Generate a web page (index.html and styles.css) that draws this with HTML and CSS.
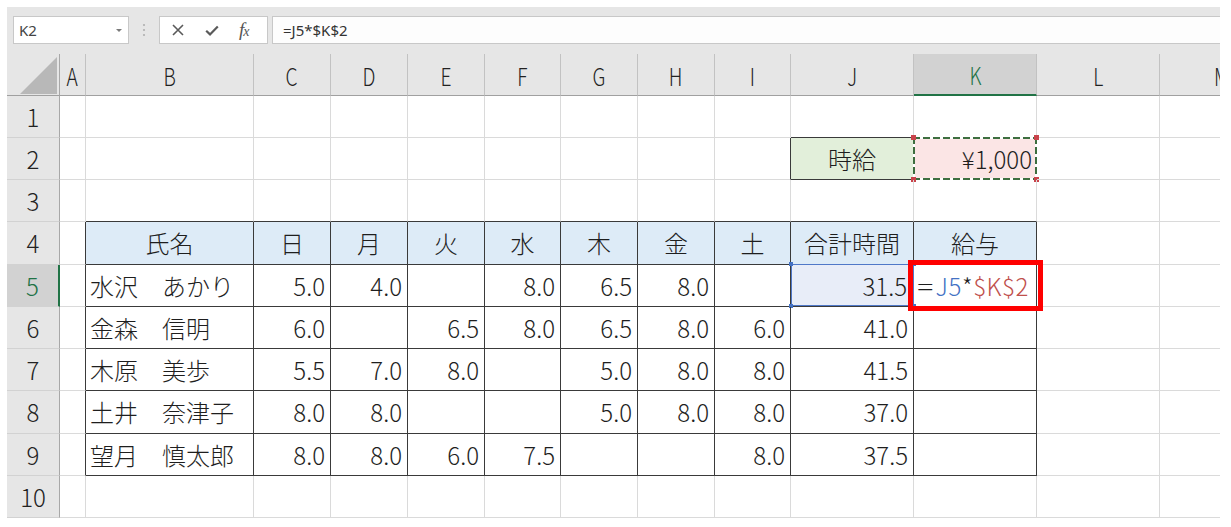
FILE: index.html
```html
<!DOCTYPE html>
<html lang="ja">
<head>
<meta charset="utf-8">
<title>Excel</title>
<link rel="stylesheet" href="styles.css">
</head>
<body>
<div class="app">
  <div class="toolbar">
    <div class="namebox"><span>K2</span><i class="caret"></i></div>
    <div class="grip"><svg width="4" height="14" viewBox="0 0 4 14"><circle cx="2" cy="2" r="1.1" fill="#b0b0b0"/><circle cx="2" cy="7" r="1.1" fill="#b0b0b0"/><circle cx="2" cy="12" r="1.1" fill="#b0b0b0"/></svg></div>
    <div class="fxbox">
      <svg width="12" height="12" viewBox="0 0 12 12"><path d="M1 1L11 11M11 1L1 11" stroke="#5a5a5a" stroke-width="1.6" fill="none"/></svg>
      <svg width="14" height="11" viewBox="0 0 14 11"><path d="M1.2 5.8L5 9.4L12.8 1.4" stroke="#5a5a5a" stroke-width="2.2" fill="none"/></svg>
      <span class="fx">f<span class="fxx">x</span></span>
    </div>
    <div class="formula">=J5*$K$2</div>
  </div>
  <div class="viewport">
    <div class="sheet">
      <div class="corner"><i class="tri"></i></div>
      <div class="ch"><span>A</span></div>
      <div class="ch"><span>B</span></div>
      <div class="ch"><span>C</span></div>
      <div class="ch"><span>D</span></div>
      <div class="ch"><span>E</span></div>
      <div class="ch"><span>F</span></div>
      <div class="ch"><span>G</span></div>
      <div class="ch"><span>H</span></div>
      <div class="ch"><span>I</span></div>
      <div class="ch"><span>J</span></div>
      <div class="ch on"><span>K</span></div>
      <div class="ch"><span>L</span></div>
      <div class="ch last"><span>M</span></div>

      <div class="rh">1</div>
      <div class="c"></div><div class="c"></div><div class="c"></div><div class="c"></div><div class="c"></div><div class="c"></div><div class="c"></div><div class="c"></div><div class="c"></div>
      <div class="c bB"></div><div class="c"></div><div class="c"></div><div class="c"></div>

      <div class="rh">2</div>
      <div class="c"></div><div class="c"></div><div class="c"></div><div class="c"></div><div class="c"></div><div class="c"></div><div class="c"></div><div class="c"></div>
      <div class="c bR"></div>
      <div class="c t green ctr">時給</div>
      <div class="c pink num">¥1,000<div class="ants"><i class="sq tl"></i><i class="sq tr"></i><i class="sq bl"></i><i class="sq br"></i></div></div>
      <div class="c"></div><div class="c"></div>

      <div class="rh">3</div>
      <div class="c"></div>
      <div class="c bB"></div><div class="c bB"></div><div class="c bB"></div><div class="c bB"></div><div class="c bB"></div><div class="c bB"></div><div class="c bB"></div><div class="c bB"></div><div class="c bB"></div><div class="c bB"></div>
      <div class="c"></div><div class="c"></div>

      <div class="rh">4</div>
      <div class="c bR"></div>
      <div class="c t hd ctr">氏名</div>
      <div class="c t hd ctr">日</div>
      <div class="c t hd ctr">月</div>
      <div class="c t hd ctr">火</div>
      <div class="c t hd ctr">水</div>
      <div class="c t hd ctr">木</div>
      <div class="c t hd ctr">金</div>
      <div class="c t hd ctr">土</div>
      <div class="c t hd ctr">合計時間</div>
      <div class="c t hd ctr">給与</div>
      <div class="c"></div><div class="c"></div>

      <div class="rh on">5</div>
      <div class="c bR"></div>
      <div class="c t name">水沢　あかり</div>
      <div class="c t num">5.0</div>
      <div class="c t num">4.0</div>
      <div class="c t num"></div>
      <div class="c t num">8.0</div>
      <div class="c t num">6.5</div>
      <div class="c t num">8.0</div>
      <div class="c t num"></div>
      <div class="c t num ref">31.5<div class="refbox"><i class="bsq tl"></i><i class="bsq tr"></i><i class="bsq bl"></i><i class="bsq br"></i></div></div>
      <div class="c t edit"><span class="eq">=</span><span class="blue">J5</span><span>*</span><span class="red">$K$2</span><div class="redbox"></div></div>
      <div class="c"></div><div class="c"></div>

      <div class="rh">6</div>
      <div class="c bR"></div>
      <div class="c t name">金森　信明</div>
      <div class="c t num">6.0</div>
      <div class="c t num"></div>
      <div class="c t num">6.5</div>
      <div class="c t num">8.0</div>
      <div class="c t num">6.5</div>
      <div class="c t num">8.0</div>
      <div class="c t num">6.0</div>
      <div class="c t num">41.0</div>
      <div class="c t"></div>
      <div class="c"></div><div class="c"></div>

      <div class="rh">7</div>
      <div class="c bR"></div>
      <div class="c t name">木原　美歩</div>
      <div class="c t num">5.5</div>
      <div class="c t num">7.0</div>
      <div class="c t num">8.0</div>
      <div class="c t num"></div>
      <div class="c t num">5.0</div>
      <div class="c t num">8.0</div>
      <div class="c t num">8.0</div>
      <div class="c t num">41.5</div>
      <div class="c t"></div>
      <div class="c"></div><div class="c"></div>

      <div class="rh">8</div>
      <div class="c bR"></div>
      <div class="c t name">土井　奈津子</div>
      <div class="c t num">8.0</div>
      <div class="c t num">8.0</div>
      <div class="c t num"></div>
      <div class="c t num"></div>
      <div class="c t num">5.0</div>
      <div class="c t num">8.0</div>
      <div class="c t num">8.0</div>
      <div class="c t num">37.0</div>
      <div class="c t"></div>
      <div class="c"></div><div class="c"></div>

      <div class="rh">9</div>
      <div class="c bR"></div>
      <div class="c t name">望月　慎太郎</div>
      <div class="c t num">8.0</div>
      <div class="c t num">8.0</div>
      <div class="c t num">6.0</div>
      <div class="c t num">7.5</div>
      <div class="c t num"></div>
      <div class="c t num"></div>
      <div class="c t num">8.0</div>
      <div class="c t num">37.5</div>
      <div class="c t"></div>
      <div class="c"></div><div class="c"></div>

      <div class="rh">10</div>
      <div class="c"></div><div class="c"></div><div class="c"></div><div class="c"></div><div class="c"></div><div class="c"></div><div class="c"></div><div class="c"></div><div class="c"></div><div class="c"></div><div class="c"></div><div class="c"></div><div class="c"></div>
    </div>
  </div>
</div>
</body>
</html>
```
FILE: styles.css
```css
html, body {
  margin: 0;
  padding: 0;
  background: #ffffff;
}
body {
  font-family: "Noto Sans CJK JP", "Noto Sans", sans-serif;
  color: #1e1e1e;
}
.app {
  margin: 7px 0 0 7px;
  width: 1213px;
}

/* ---------- formula toolbar ---------- */
.toolbar {
  display: flex;
  align-items: flex-start;
  height: 47px;
  box-sizing: border-box;
  padding: 9px 0 0 6px;
  background: #e6e6e6;
}
.namebox {
  width: 116px;
  height: 28px;
  box-sizing: border-box;
  border: 1px solid #c8c8c8;
  background: #ffffff;
  display: flex;
  align-items: center;
  justify-content: space-between;
  padding: 0 6px 0 5px;
  font: 15px "Noto Sans", "Liberation Sans", sans-serif;
  color: #444444;
}
.caret {
  width: 0;
  height: 0;
  border-left: 3px solid transparent;
  border-right: 3px solid transparent;
  border-top: 3px solid #7a7a7a;
}
.grip {
  width: 30px;
  height: 28px;
  display: flex;
  align-items: center;
  justify-content: center;
}
.fxbox {
  width: 109px;
  height: 28px;
  box-sizing: border-box;
  border: 1px solid #c8c8c8;
  background: #ffffff;
  display: flex;
  align-items: center;
  gap: 21px;
  padding-left: 12px;
}
.fx {
  font: italic 19px "Liberation Serif", serif;
  color: #555555;
  letter-spacing: -1px;
  margin-left: -1px;
}
.fxx {
  font-size: 14px;
}
.formula {
  flex: 1;
  margin-left: 4px;
  height: 28px;
  box-sizing: border-box;
  border: 1px solid #c8c8c8;
  border-right: none;
  background: #fdfdfd;
  display: flex;
  align-items: center;
  padding-left: 10px;
  font: 15px "Noto Sans", "Liberation Sans", sans-serif;
  color: #333333;
}

/* ---------- sheet grid ---------- */
.viewport {
  width: 1213px;
  overflow: hidden;
}
.sheet {
  display: grid;
  grid-template-columns: 53px 26px 168px 77px 77px 77px 76px 77px 77px 76px 123px 123px 123px 123px;
  grid-template-rows: 42px 42px 42px 42px 43px 42px 42px 42px 43px 42px 42px;
}
.corner {
  background: #e6e6e6;
  border-right: 1px solid #a8a8a8;
  border-bottom: 1px solid #a0a0a0;
  display: flex;
  align-items: flex-end;
  justify-content: flex-end;
  padding: 0 2px 1px 0;
}
.tri {
  width: 0;
  height: 0;
  border-left: 37px solid transparent;
  border-bottom: 37px solid #b8b8b8;
}
.ch {
  background: #e6e6e6;
  border-right: 1px solid #c2c2c2;
  border-bottom: 1px solid #a0a0a0;
  display: flex;
  align-items: center;
  justify-content: center;
  font-size: 24px;
  font-weight: 300;
  line-height: 1;
  color: #222222;
  padding-top: 2px;
}
.ch span {
  display: inline-block;
  transform: scaleX(0.8);
}
.ch.last {
  justify-content: flex-start;
  padding-left: 52px;
}
.ch.on {
  background: #d2d2d2;
  color: #217346;
  border-bottom: 2px solid #217346;
}
.rh {
  background: #e6e6e6;
  border-right: 1px solid #a8a8a8;
  border-bottom: 1px solid #d2d2d2;
  display: flex;
  align-items: center;
  justify-content: center;
  font-size: 24px;
  font-weight: 300;
  line-height: 1;
  color: #222222;
}
.rh.on {
  background: #d2d2d2;
  color: #217346;
  border-right: 2px solid #217346;
}
.c {
  position: relative;
  box-sizing: border-box;
  border-right: 1px solid #dadada;
  border-bottom: 1px solid #dadada;
  display: flex;
  align-items: center;
  padding: 0 5px;
  font-size: 24px;
  font-weight: 300;
  line-height: 1;
  white-space: nowrap;
  min-width: 0;
}
.t {
  border-right-color: #3a3a3a;
  border-bottom-color: #3a3a3a;
}
.bR {
  border-right-color: #3a3a3a;
}
.bB {
  border-bottom-color: #3a3a3a;
}
.num {
  justify-content: flex-end;
}
.ctr {
  justify-content: center;
}
.name {
  padding-left: 4px;
}
.hd {
  background: #ddebf7;
}
.green {
  background: #e2efda;
}
.pink {
  background: #fbe5e5;
  padding-right: 4px;
}

/* copy marquee on K2 */
.ants {
  position: absolute;
  top: -1px;
  left: -1px;
  right: -1px;
  bottom: -1px;
  background:
    repeating-linear-gradient(90deg, #3d6e3f 0 7px, #ffffff 7px 10px) left top / 100% 2px no-repeat,
    repeating-linear-gradient(90deg, #3d6e3f 0 7px, #ffffff 7px 10px) left bottom / 100% 2px no-repeat,
    repeating-linear-gradient(180deg, #3d6e3f 0 7px, #ffffff 7px 10px) left top / 2px 100% no-repeat,
    repeating-linear-gradient(180deg, #3d6e3f 0 7px, #ffffff 7px 10px) right top / 2px 100% no-repeat;
}
.sq {
  position: absolute;
  width: 5px;
  height: 5px;
  background: #c9434b;
}
.sq.tl { left: -2px; top: -2px; }
.sq.tr { right: -2px; top: -2px; }
.sq.bl { left: -2px; bottom: -2px; }
.sq.br { right: -2px; bottom: -2px; }

/* reference highlight on J5 */
.ref {
  background: #e8edf8;
  padding-right: 6px;
}
.refbox {
  position: absolute;
  top: -1px;
  left: 0;
  right: -1px;
  bottom: 0;
  border: 1px solid #4f78c8;
}
.bsq {
  position: absolute;
  width: 4px;
  height: 4px;
  background: #4472c4;
}
.bsq.tl { left: -3px; top: -3px; }
.bsq.tr { right: -3px; top: -3px; }
.bsq.bl { left: -3px; bottom: -3px; }
.bsq.br { right: -3px; bottom: -3px; }

/* editing cell K5 */
.edit {
  padding-left: 4px;
  letter-spacing: 0.6px;
}
.eq {
  display: inline-block;
  transform: scaleX(1.25);
  margin: 0 3px 0 1px;
}
.blue {
  color: #4472c4;
}
.red {
  color: #c0504d;
}
.redbox {
  position: absolute;
  top: -5px;
  left: -6px;
  right: -7px;
  bottom: -5px;
  border: 5px solid #ff0000;
  z-index: 5;
}
```
